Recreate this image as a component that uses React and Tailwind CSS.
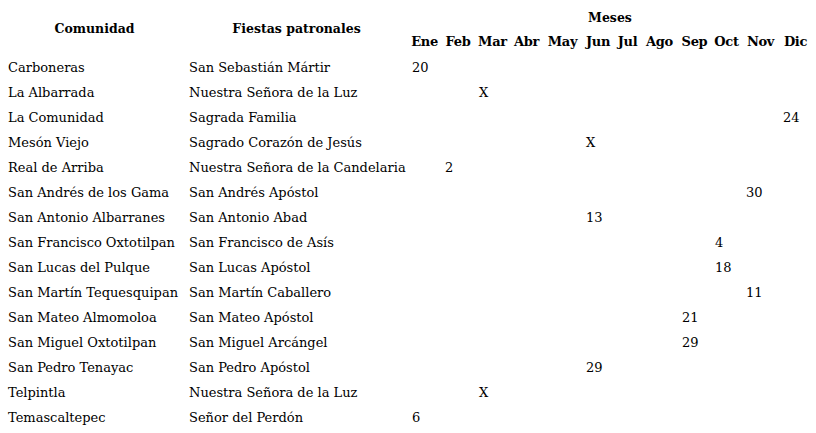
import React from 'react'

const months = ['Ene', 'Feb', 'Mar', 'Abr', 'May', 'Jun', 'Jul', 'Ago', 'Sep', 'Oct', 'Nov', 'Dic']

// [comunidad, fiesta, month index, value]
const rows = [
  ['Carboneras', 'San Sebastián Mártir', 0, '20'],
  ['La Albarrada', 'Nuestra Señora de la Luz', 2, 'X'],
  ['La Comunidad', 'Sagrada Familia', 11, '24'],
  ['Mesón Viejo', 'Sagrado Corazón de Jesús', 5, 'X'],
  ['Real de Arriba', 'Nuestra Señora de la Candelaria', 1, '2'],
  ['San Andrés de los Gama', 'San Andrés Apóstol', 10, '30'],
  ['San Antonio Albarranes', 'San Antonio Abad', 5, '13'],
  ['San Francisco Oxtotilpan', 'San Francisco de Asís', 9, '4'],
  ['San Lucas del Pulque', 'San Lucas Apóstol', 9, '18'],
  ['San Martín Tequesquipan', 'San Martín Caballero', 10, '11'],
  ['San Mateo Almomoloa', 'San Mateo Apóstol', 8, '21'],
  ['San Miguel Oxtotilpan', 'San Miguel Arcángel', 8, '29'],
  ['San Pedro Tenayac', 'San Pedro Apóstol', 5, '29'],
  ['Telpintla', 'Nuestra Señora de la Luz', 2, 'X'],
  ['Temascaltepec', 'Señor del Perdón', 0, '6'],
]

const cols =
  'grid-cols-[181px_223px_33px_34px_35px_33px_39px_32px_27px_37px_33px_31px_37px_33px]'

export default function App() {
  return (
    <div className="w-[816px] h-[433px] bg-white text-black pt-[5px] pl-[4px] overflow-hidden font-['DejaVu_Serif','Liberation_Serif',serif]">
      <div className={`grid ${cols} text-[13px] leading-none`}>
        <div className="row-span-2 flex items-center justify-center font-bold text-[12.5px] pb-[2px]">
          Comunidad
        </div>
        <div className="row-span-2 flex items-center justify-center font-bold text-[12.5px] pb-[2px]">
          Fiestas patronales
        </div>
        <div className="col-span-12 h-[25px] flex items-center justify-center font-bold text-[12.5px] pt-[2px]">
          Meses
        </div>
        {months.map((m) => (
          <div key={m} className="h-[25px] flex items-center justify-center font-bold tracking-[-0.3px] pb-[2px]">
            {m}
          </div>
        ))}
        {rows.map(([com, fiesta, mi, val]) => (
          <React.Fragment key={com}>
            <div className="h-[25px] flex items-center px-[4px] whitespace-nowrap">{com}</div>
            <div className="h-[25px] flex items-center px-[4px] whitespace-nowrap">{fiesta}</div>
            {months.map((m, i) => (
              <div key={m} className="h-[25px] flex items-center px-[4px]">
                {i === mi ? val : ''}
              </div>
            ))}
          </React.Fragment>
        ))}
      </div>
    </div>
  )
}
